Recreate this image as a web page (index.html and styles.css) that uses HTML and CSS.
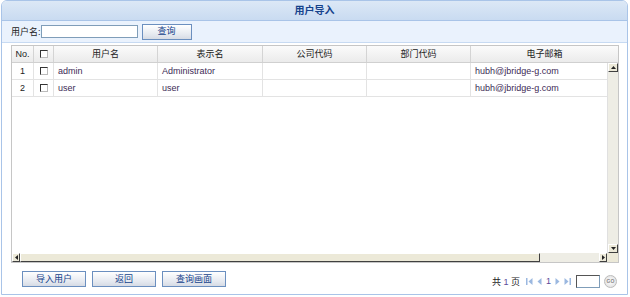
FILE: index.html
```html
<!DOCTYPE html>
<html>
<head>
<meta charset="utf-8">
<link rel="stylesheet" href="styles.css">
</head>
<body>
<div class="panel">
  <div class="title">用户导入</div>
  <div class="toolbar">
    <label class="lbl">用户名:</label>
    <input class="txt" type="text">
    <button class="btn btn-search">查询</button>
  </div>
  <div class="grid">
    <div class="ghead">
      <div class="hc c-no">No.</div>
      <div class="hc c-ck"><span class="ck"></span></div>
      <div class="hc c-user">用户名</div>
      <div class="hc c-disp">表示名</div>
      <div class="hc c-comp">公司代码</div>
      <div class="hc c-dept">部门代码</div>
      <div class="hc c-mail">电子邮箱</div>
    </div>
    <div class="gbody">
      <div class="rows">
        <div class="row">
          <div class="dc c-no num">1</div>
          <div class="dc c-ck"><span class="ck"></span></div>
          <div class="dc c-user">admin</div>
          <div class="dc c-disp">Administrator</div>
          <div class="dc c-comp"></div>
          <div class="dc c-dept"></div>
          <div class="dc c-mail">hubh@jbridge-g.com</div>
        </div>
        <div class="row">
          <div class="dc c-no num">2</div>
          <div class="dc c-ck"><span class="ck"></span></div>
          <div class="dc c-user">user</div>
          <div class="dc c-disp">user</div>
          <div class="dc c-comp"></div>
          <div class="dc c-dept"></div>
          <div class="dc c-mail">hubh@jbridge-g.com</div>
        </div>
      </div>
      <div class="vscroll">
        <div class="sbtn"><svg width="5" height="3" viewBox="0 0 5 3"><path d="M0 3 L2.5 0 L5 3Z" fill="#222"/></svg></div>
        <div class="strack"></div>
        <div class="sbtn"><svg width="5" height="3" viewBox="0 0 5 3"><path d="M0 0 L2.5 3 L5 0Z" fill="#222"/></svg></div>
      </div>
      <div class="hscroll">
        <div class="sbtn"><svg width="3" height="5" viewBox="0 0 3 5"><path d="M3 0 L0 2.5 L3 5Z" fill="#222"/></svg></div>
        <div class="hthumb"></div>
        <div class="strack"></div>
        <div class="sbtn"><svg width="3" height="5" viewBox="0 0 3 5"><path d="M0 0 L3 2.5 L0 5Z" fill="#222"/></svg></div>
      </div>
      <div class="corner"></div>
    </div>
  </div>
  <div class="footer">
    <div class="actions">
      <button class="btn btn-wide">导入用户</button>
      <button class="btn btn-wide">返回</button>
      <button class="btn btn-wide">查询画面</button>
    </div>
    <div class="pager">
      <span class="ptext">共 <b>1</b> 页</span>
      <svg class="pi" width="7" height="7" viewBox="0 0 7 7"><rect x="0" y="0" width="1.5" height="7" fill="#9bb8e0"/><path d="M6.5 0 L2.5 3.5 L6.5 7Z" fill="#9bb8e0"/></svg>
      <svg class="pi" width="5" height="7" viewBox="0 0 5 7"><path d="M4.5 0 L0.5 3.5 L4.5 7Z" fill="#9bb8e0"/></svg>
      <span class="pnum">1</span>
      <svg class="pi" width="5" height="7" viewBox="0 0 5 7"><path d="M0.5 0 L4.5 3.5 L0.5 7Z" fill="#9bb8e0"/></svg>
      <svg class="pi" width="7" height="7" viewBox="0 0 7 7"><path d="M0.5 0 L4.5 3.5 L0.5 7Z" fill="#9bb8e0"/><rect x="5.5" y="0" width="1.5" height="7" fill="#9bb8e0"/></svg>
      <input class="pinput" type="text">
      <span class="go">GO</span>
    </div>
  </div>
</div>
</body>
</html>
```

FILE: styles.css
```css
* { box-sizing: border-box; }
html, body { margin: 0; padding: 0; background: #fff; }
body {
  font-family: "Liberation Sans", "Noto Sans CJK SC", sans-serif;
  font-size: 9px;
  color: #222;
}
.panel {
  margin-left: 1px;
  width: 627px;
  height: 295px;
  border: 1px solid #a9c4e8;
  border-radius: 6px 6px 0 0;
  overflow: hidden;
  display: flex;
  flex-direction: column;
}
.title {
  height: 20px;
  line-height: 19px;
  text-align: center;
  font-weight: bold;
  font-size: 10px;
  color: #15428b;
  background: linear-gradient(#dce8f6, #c9dbf1);
  border-bottom: 1px solid #a9c4e8;
}
.toolbar {
  height: 22px;
  display: flex;
  align-items: center;
  padding-left: 9px;
  background: #eaf2fd;
  border-bottom: 1px solid #c7daf2;
}
.lbl { color: #222; margin-right: 0; }
.txt {
  width: 97px;
  height: 13px;
  border: 1px solid #7f9db9;
  background: #fff;
  padding: 0;
  margin: 0;
}
.btn {
  font-family: "Liberation Sans", "Noto Sans CJK SC", sans-serif;
  font-size: 9px;
  color: #15428b;
  height: 16px;
  padding: 0;
  margin: 0;
  border: 1px solid #6b8fbf;
  background: linear-gradient(#ffffff, #e4e8ef 70%, #d6dbe4);
  line-height: 13px;
}
.btn-search { width: 50px; margin-left: 4px; height: 16px; }
.grid {
  margin: 2px 0 0 9px;
  width: 608px;
  height: 218px;
  border: 1px solid #c6c6c6;
  display: flex;
  flex-direction: column;
  background: #fff;
}
.ghead {
  display: flex;
  height: 17px;
  background: linear-gradient(#fbfbfb, #ebebeb);
  border-bottom: 1px solid #d0d0d0;
  flex: none;
}
.hc {
  border-right: 1px solid #d4d4d4;
  text-align: center;
  line-height: 16px;
  color: #222;
  flex: none;
}
.hc.c-mail { border-right: none; flex: 1; }
.c-no { width: 22px; }
.c-ck { width: 20px; display: flex; align-items: center; justify-content: center; }
.c-user { width: 104px; }
.c-disp { width: 105px; }
.c-comp { width: 104px; }
.c-dept { width: 104px; }
.c-mail { width: 137px; }
.ck {
  display: block;
  width: 8px;
  height: 8px;
  border: 1px solid #333;
  border-right-color: #bbb;
  border-bottom-color: #bbb;
  background: #fff;
}
.gbody {
  flex: 1;
  display: grid;
  grid-template-columns: 1fr 11px;
  grid-template-rows: 1fr 9px;
  min-height: 0;
}
.rows { overflow: hidden; }
.row {
  display: flex;
  height: 17px;
  border-bottom: 1px solid #e3e3e3;
}
.dc {
  flex: none;
  border-right: 1px solid #e3e3e3;
  line-height: 16px;
  padding-left: 4px;
  color: #3d2a55;
  white-space: nowrap;
  overflow: hidden;
}
.dc.num { text-align: center; padding-left: 0; color: #222; }
.dc.c-ck { padding-left: 0; }
.dc.c-mail { border-right: none; width: 133px; }
.vscroll {
  background: #eeede5;
  display: flex;
  flex-direction: column;
  border-left: 1px solid #e0e0e0;
}
.vscroll .sbtn { width: 10px; height: 9px; }
.hscroll {
  background: #eeede5;
  display: flex;
  align-items: stretch;
}
.sbtn {
  flex: none;
  width: 8px;
  background: #ece9d8;
  border: 1px solid;
  border-color: #fff #404040 #404040 #fff;
  display: flex;
  align-items: center;
  justify-content: center;
}
.hscroll .sbtn { width: 8px; }
.strack { flex: 1; }
.hthumb {
  flex: none;
  width: 520px;
  background: #ece9d8;
  border: 1px solid;
  border-color: #fff #404040 #404040 #fff;
}
.corner { background: #ece9d8; }
.footer {
  flex: 1;
  display: flex;
  align-items: flex-start;
  justify-content: space-between;
  padding: 8px 0 0 20px;
}
.actions { display: flex; gap: 6px; }
.btn-wide { width: 64px; }
.pager {
  display: flex;
  align-items: center;
  margin-top: 4px;
  margin-right: 10px;
  height: 12px;
}
.ptext { color: #222; margin-right: 4px; }
.ptext b { font-weight: normal; color: #5a4a9a; }
.pi { margin: 0 2px; }
.pnum { margin: 0 2px; color: #5a4a9a; }
.pinput {
  width: 24px;
  height: 13px;
  border: 1px solid #7f9db9;
  border-top-color: #555;
  border-left-color: #555;
  padding: 0;
  margin: 0 4px 0 3px;
}
.go {
  width: 13px;
  height: 13px;
  border-radius: 50%;
  border: 1px solid #bbb;
  background: radial-gradient(#fff, #dcdcdc);
  color: #888;
  font-size: 5px;
  font-weight: bold;
  line-height: 11px;
  text-align: center;
}
```
